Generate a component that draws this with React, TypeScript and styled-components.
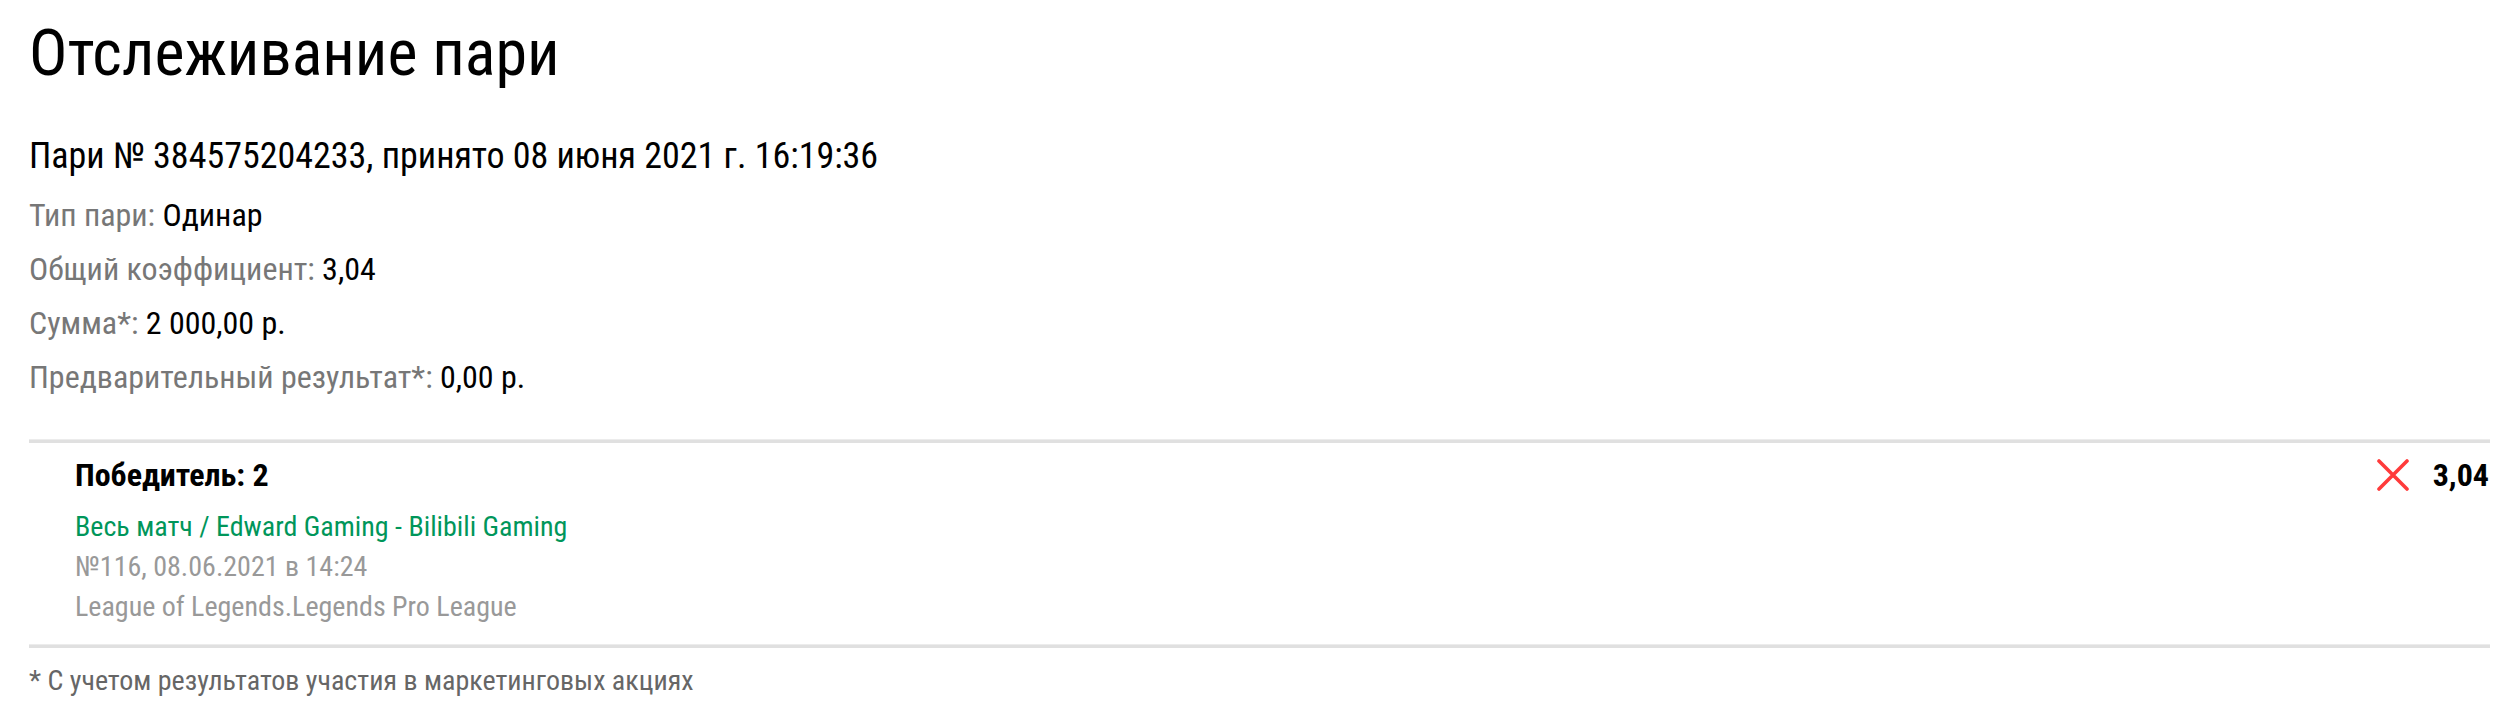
import styled, { createGlobalStyle } from "styled-components";

const GlobalStyle = createGlobalStyle`
  html, body {
    margin: 0;
    padding: 0;
    background: #fff;
  }
  body {
    font-family: "Roboto Condensed", Roboto, "Liberation Sans", sans-serif;
    font-stretch: condensed;
    color: #000;
  }
`;

const Page = styled.div`
  padding: 14px 24px 0 29px;
`;

const Title = styled.h1`
  margin: 0;
  font-size: 64px;
  line-height: 80px;
  font-weight: 400;
`;

const BetHeader = styled.div`
  margin-top: 42px;
  font-size: 36px;
  line-height: 40px;
`;

const Details = styled.div`
  margin-top: 12px;
`;

const DetailRow = styled.div`
  font-size: 32px;
  line-height: 54px;
`;

const Label = styled.span`
  color: #777;
`;

const Value = styled.span`
  color: #000;
`;

const Divider = styled.div`
  height: 3px;
  background: #e0e0e0;
  border-top: 1px solid #ececec;
`;

const Events = styled.div`
  margin-top: 35px;
`;

const EventRow = styled.div`
  display: flex;
  justify-content: space-between;
  align-items: flex-start;
  padding: 12px 1px 17px 46px;
`;

const EventInfo = styled.div`
  display: flex;
  flex-direction: column;
  font-size: 28px;
  line-height: 40px;
`;

const Outcome = styled.div`
  font-size: 32px;
  font-weight: 700;
`;

const MatchLink = styled.div`
  margin-top: 12px;
  color: #00965a;
`;

const Meta = styled.div`
  color: #999;
`;

const Result = styled.div`
  display: flex;
  align-items: center;
  gap: 24px;
  height: 40px;
`;

const Odds = styled.span`
  font-size: 32px;
  line-height: 40px;
  font-weight: 700;
`;

const Footnote = styled.div`
  margin-top: 15px;
  font-size: 28px;
  line-height: 36px;
  color: #666;
`;

const LostIcon = () => (
  <svg width="32" height="32" viewBox="0 0 32 32">
    <path
      d="M2 2 L30 30 M30 2 L2 30"
      stroke="#ff3b3b"
      strokeWidth="3.6"
      strokeLinecap="round"
      fill="none"
    />
  </svg>
);

const details = [
  { label: "Тип пари:", value: "Одинар" },
  { label: "Общий коэффициент:", value: "3,04" },
  { label: "Сумма*:", value: "2 000,00 р." },
  { label: "Предварительный результат*:", value: "0,00 р." },
];

export default function App() {
  return (
    <>
      <GlobalStyle />
      <Page>
        <Title>Отслеживание пари</Title>
        <BetHeader>Пари № 384575204233, принято 08 июня 2021 г. 16:19:36</BetHeader>
        <Details>
          {details.map((d) => (
            <DetailRow key={d.label}>
              <Label>{d.label}</Label> <Value>{d.value}</Value>
            </DetailRow>
          ))}
        </Details>
        <Events>
          <Divider />
          <EventRow>
            <EventInfo>
              <Outcome>Победитель: 2</Outcome>
              <MatchLink>Весь матч / Edward Gaming - Bilibili Gaming</MatchLink>
              <Meta>№116, 08.06.2021 в 14:24</Meta>
              <Meta>League of Legends.Legends Pro League</Meta>
            </EventInfo>
            <Result>
              <LostIcon />
              <Odds>3,04</Odds>
            </Result>
          </EventRow>
          <Divider />
        </Events>
        <Footnote>* С учетом результатов участия в маркетинговых акциях</Footnote>
      </Page>
    </>
  );
}
